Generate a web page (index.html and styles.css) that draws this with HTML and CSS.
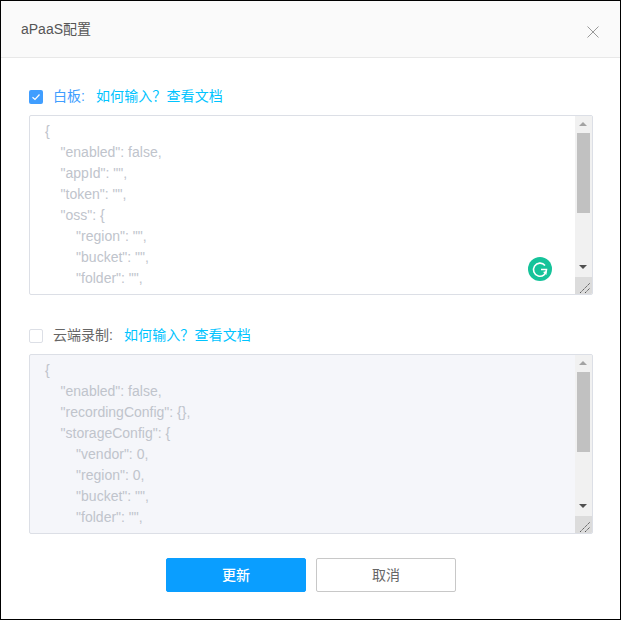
FILE: index.html
```html
<!DOCTYPE html>
<html lang="zh">
<head>
<meta charset="utf-8">
<title>aPaaS配置</title>
<link rel="stylesheet" href="styles.css">
</head>
<body>
<div class="dialog">
  <header class="head">
    <span class="title">aPaaS配置</span>
    <svg class="close" width="12" height="12" viewBox="0 0 12 12"><path d="M.5.5l11 11M11.500.5l-11 11" stroke="#999" fill="none"/></svg>
  </header>
  <main class="body">
    <section class="field first">
      <div class="label-row">
        <span class="check on"><svg width="14" height="14" viewBox="0 0 14 14"><path d="M3.500 7.200l2.500 2.300 4.500-5" stroke="#fff" stroke-width="1.200" fill="none"/></svg></span>
        <span class="label active">白板:</span>
        <a class="link">如何输入？查看文档</a>
      </div>
      <div class="box">
        <pre class="code">{
    "enabled": false,
    "appId": "",
    "token": "",
    "oss": {
        "region": "",
        "bucket": "",
        "folder": "",</pre>
        <div class="bar">
          <span class="arrow up"></span>
          <span class="thumb"></span>
          <span class="arrow down"></span>
          <span class="grip"><svg width="17" height="17" viewBox="0 0 17 17"><path d="M5 16L15 6M10 16l5-5" stroke="#555" stroke-dasharray="1.500 .7" fill="none"/></svg></span>
        </div>
        <svg class="grammarly" width="24" height="24" viewBox="0 0 24 24"><circle cx="12" cy="12" r="12" fill="#15c39a"/><path d="M17 8.500A6.500 6.500 0 1 0 18.500 12.500H13" stroke="#fff" stroke-width="1.600" fill="none"/><path d="M15 15l3.500 3v-4z" fill="#fff"/></svg>
      </div>
    </section>
    <section class="field second">
      <div class="label-row">
        <span class="check"></span>
        <span class="label">云端录制:</span>
        <a class="link">如何输入？查看文档</a>
      </div>
      <div class="box off">
        <pre class="code">{
    "enabled": false,
    "recordingConfig": {},
    "storageConfig": {
        "vendor": 0,
        "region": 0,
        "bucket": "",
        "folder": "",</pre>
        <div class="bar">
          <span class="arrow up dim"></span>
          <span class="thumb"></span>
          <span class="arrow down"></span>
          <span class="grip"><svg width="17" height="17" viewBox="0 0 17 17"><path d="M5 16L15 6M10 16l5-5" stroke="#555" stroke-dasharray="1.500 .7" fill="none"/></svg></span>
        </div>
      </div>
    </section>
    <div class="actions">
      <button class="btn primary">更新</button>
      <button class="btn">取消</button>
    </div>
  </main>
</div>
</body>
</html>
```
FILE: styles.css
```css
* { box-sizing: border-box; }
html, body { margin: 0; padding: 0; background: #fff; }
body { width: 621px; height: 620px; overflow: hidden; font-family: "Liberation Sans", "Noto Sans CJK SC", sans-serif; }
.dialog { width: 621px; height: 620px; border: 1px solid #000; background: #fff; display: flex; flex-direction: column; }
.head { height: 57px; flex: none; background: #fafafa; border-bottom: 1px solid #e8e8e8; display: flex; align-items: center; justify-content: space-between; padding: 0 21px 0 20px; }
.title { font-size: 14px; color: #555; padding-bottom: 2px; }
.close { margin-top: 5px; }
.body { flex: 1; padding: 0 27px 0 28px; display: flex; flex-direction: column; }
.field.first { margin-top: 29px; }
.field.second { margin-top: 31px; }
.label-row { height: 20px; display: flex; align-items: center; font-size: 14px; }
.check { width: 14px; height: 14px; border-radius: 2px; border: 1px solid #dcdfe6; background: #fff; margin-right: 10px; display: block; flex: none; }
.check.on { background: #409eff; border: 0; }
.check svg { display: block; }
.label { color: #666; margin-right: 11px; padding-bottom: 5px; }
.label.active { color: #409eff; }
.link { color: #00c4ff; padding-bottom: 5px; letter-spacing: .12px; }
.box { position: relative; margin-top: 8px; height: 180px; border: 1px solid #dcdfe6; border-radius: 2px; background: #fff; display: flex; overflow: hidden; }
.box.off { background: #f5f6fa; }
.code { flex: 1; margin: 0; padding: 5px 15px; font: 14px/21px "Liberation Sans", sans-serif; color: #c0c4cc; white-space: pre; overflow: hidden; }
.bar { width: 17px; flex: none; background: #f1f1f1; display: flex; flex-direction: column; align-items: center; position: relative; padding-top: 17px; }
.thumb { width: 13px; height: 80px; background: #c1c1c1; }
.arrow { position: absolute; left: 4px; width: 0; height: 0; border-left: 4px solid transparent; border-right: 4px solid transparent; }
.arrow.up { top: 6px; border-bottom: 4px solid #a3a3a3; }
.arrow.down { top: 149px; border-top: 4px solid #505050; }
.grip { position: absolute; left: 0; bottom: 0; width: 17px; height: 17px; background: #dcdcdc; }
.grip svg { display: block; }
.grammarly { position: absolute; left: 498px; top: 141px; }
.actions { display: flex; justify-content: center; gap: 10px; margin-top: 24px; }
.btn { width: 140px; height: 34px; border: 1px solid #c8c8c8; border-radius: 2px; background: #fff; color: #666; font: 14px "Liberation Sans", "Noto Sans CJK SC", sans-serif; padding: 0 0 2px; }
.btn.primary { background: #0a9eff; border-color: #0a9eff; color: #fff; font-weight: 500; }
```
